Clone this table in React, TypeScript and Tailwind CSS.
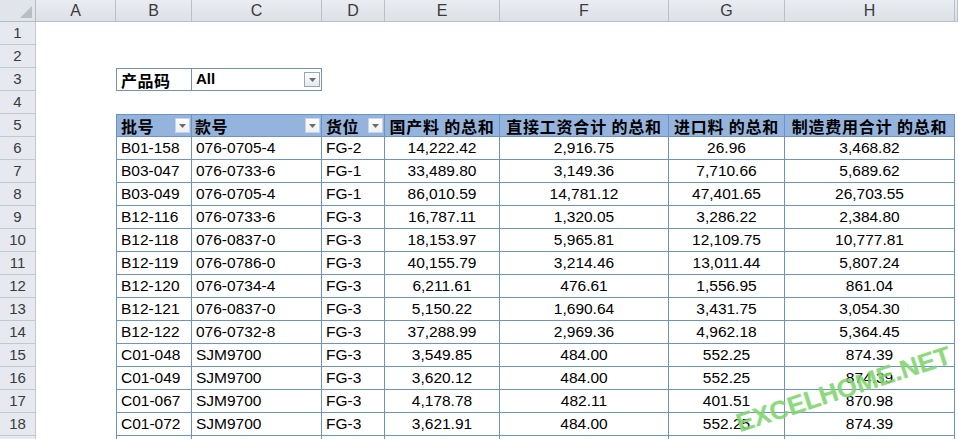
import React from "react";

const LAT = "font-['Liberation_Sans',Arial,sans-serif]";
const CJK = "font-['Noto_Sans_CJK_SC','Noto_Sans',sans-serif]";

const W = ["w-[80px]", "w-[76px]", "w-[130px]", "w-[63px]", "w-[115px]", "w-[169px]", "w-[116px]", "w-[170px]", "w-[3px]"];
const letters = ["A", "B", "C", "D", "E", "F", "G", "H", ""];

const rows: string[][] = [
  ["B01-158", "076-0705-4", "FG-2", "14,222.42", "2,916.75", "26.96", "3,468.82"],
  ["B03-047", "076-0733-6", "FG-1", "33,489.80", "3,149.36", "7,710.66", "5,689.62"],
  ["B03-049", "076-0705-4", "FG-1", "86,010.59", "14,781.12", "47,401.65", "26,703.55"],
  ["B12-116", "076-0733-6", "FG-3", "16,787.11", "1,320.05", "3,286.22", "2,384.80"],
  ["B12-118", "076-0837-0", "FG-3", "18,153.97", "5,965.81", "12,109.75", "10,777.81"],
  ["B12-119", "076-0786-0", "FG-3", "40,155.79", "3,214.46", "13,011.44", "5,807.24"],
  ["B12-120", "076-0734-4", "FG-3", "6,211.61", "476.61", "1,556.95", "861.04"],
  ["B12-121", "076-0837-0", "FG-3", "5,150.22", "1,690.64", "3,431.75", "3,054.30"],
  ["B12-122", "076-0732-8", "FG-3", "37,288.99", "2,969.36", "4,962.18", "5,364.45"],
  ["C01-048", "SJM9700", "FG-3", "3,549.85", "484.00", "552.25", "874.39"],
  ["C01-049", "SJM9700", "FG-3", "3,620.12", "484.00", "552.25", "874.39"],
  ["C01-067", "SJM9700", "FG-3", "4,178.78", "482.11", "401.51", "870.98"],
  ["C01-072", "SJM9700", "FG-3", "3,621.91", "484.00", "552.25", "874.39"],
  ["", "", "", "", "", "", ""],
];

const BLUE = "border-[#6c93c8]";

function Drop({ boxed }: { boxed?: boolean }) {
  return (
    <div
      className={`flex items-center justify-center shrink-0 ${boxed ? "w-[16px] h-[15px] border border-[#9aa5b3] bg-gradient-to-b from-[#ffffff] to-[#e6e9ee]" : "w-[15px] h-[15px] border border-[#c8d4e4] bg-gradient-to-b from-[#ffffff] to-[#eef0f3]"}`}
    >
      <svg width="7" height="4" viewBox="0 0 7 4">
        <path d="M0 0 L7 0 L3.5 4 Z" fill="#6b6b6b" />
      </svg>
    </div>
  );
}

function RowHead({ n }: { n: number }) {
  return (
    <div className={`w-[36px] h-full shrink-0 bg-[#e6e9ef] border-r border-b border-[#c3c8d0] flex items-center justify-center text-[15px] text-[#3a3a3a] ${LAT}`}>
      {n}
    </div>
  );
}

function Row({ n, children }: { n: number; children?: React.ReactNode }) {
  return (
    <div className="flex h-[23px] shrink-0">
      <RowHead n={n} />
      {children}
    </div>
  );
}

export default function App() {
  const headers = ["国产料 的总和", "直接工资合计 的总和", "进口料 的总和", "制造费用合计 的总和"];
  return (
    <div className="relative w-[958px] h-[439px] overflow-hidden bg-white flex flex-col">
      {/* column header */}
      <div className="flex h-[22px] shrink-0">
        <div className="w-[36px] h-full shrink-0 bg-[#e1e5eb] border-r border-b border-[#b6bcc5] relative">
          <svg className="absolute right-[3px] bottom-[3px]" width="12" height="12" viewBox="0 0 12 12">
            <path d="M12 0 L12 12 L0 12 Z" fill="#b9bec6" />
          </svg>
        </div>
        {letters.map((l, i) => (
          <div
            key={i}
            className={`${W[i]} h-full shrink-0 bg-gradient-to-b from-[#e9ecf1] to-[#dde1e7] border-r border-b border-[#b9bfc8] flex items-center justify-center text-[16px] text-[#3a3a3a] ${LAT}`}
          >
            {l}
          </div>
        ))}
      </div>

      <Row n={1} />
      <Row n={2} />
      <Row n={3}>
        <div className={`${W[0]} shrink-0`} />
        <div className={`${W[1]} shrink-0 border-[#7391bd] border flex items-center pl-[4px] text-[16px] font-bold text-black tracking-[0.5px] ${CJK}`}>
          产品码
        </div>
        <div className={`w-[130px] shrink-0 border-[#7391bd] border-t border-b border-r flex items-center justify-between pl-[4px] pr-[1px] text-[15px] font-bold text-black ${LAT}`}>
          <span>All</span>
          <Drop boxed />
        </div>
      </Row>
      <Row n={4} />
      <Row n={5}>
        <div className={`${W[0]} shrink-0`} />
        <div className={`${W[1]} shrink-0 bg-[#95b4dd] border-t border-b border-l border-r ${BLUE} flex items-center justify-between pl-[4px] pr-[1px] text-[16px] font-bold text-black tracking-[0.5px] ${CJK}`}>
          <span>批号</span>
          <Drop />
        </div>
        <div className={`${W[2]} shrink-0 bg-[#95b4dd] border-t border-b border-r ${BLUE} flex items-center justify-between pl-[3px] pr-[1px] text-[16px] font-bold text-black tracking-[0.5px] ${CJK}`}>
          <span>款号</span>
          <Drop />
        </div>
        <div className={`${W[3]} shrink-0 bg-[#95b4dd] border-t border-b border-r ${BLUE} flex items-center justify-between pl-[4px] pr-[1px] text-[16px] font-bold text-black tracking-[0.5px] ${CJK}`}>
          <span>货位</span>
          <Drop />
        </div>
        {headers.map((h, i) => (
          <div
            key={h}
            className={`${W[4 + i]} shrink-0 bg-[#95b4dd] border-t border-b border-r ${BLUE} flex items-center justify-center whitespace-nowrap tracking-[0.8px] text-[16px] font-bold text-black ${CJK}`}
          >
            {h}
          </div>
        ))}
      </Row>
      {rows.map((r, ri) => (
        <Row key={ri} n={6 + ri}>
          <div className={`${W[0]} shrink-0`} />
          {r.map((v, ci) => (
            <div
              key={ci}
              className={`${W[1 + ci]} shrink-0 border-b border-r ${ci === 0 ? "border-l" : ""} ${BLUE} flex items-center ${ci < 3 ? "justify-start pl-[4px]" : "justify-center"} text-[15.5px] text-black ${LAT}`}
            >
              {v}
            </div>
          ))}
        </Row>
      ))}

      {/* watermark */}
      <div
        className={`absolute left-[736px] top-[373px] w-[215px] h-[32px] flex items-center justify-center rotate-[-18deg] text-[26px] font-bold text-[#80d46dbb] [text-shadow:0_0_1px_#80d46d99] whitespace-nowrap pointer-events-none ${LAT}`}
      >
        EXCELHOME.NET
      </div>
    </div>
  );
}
